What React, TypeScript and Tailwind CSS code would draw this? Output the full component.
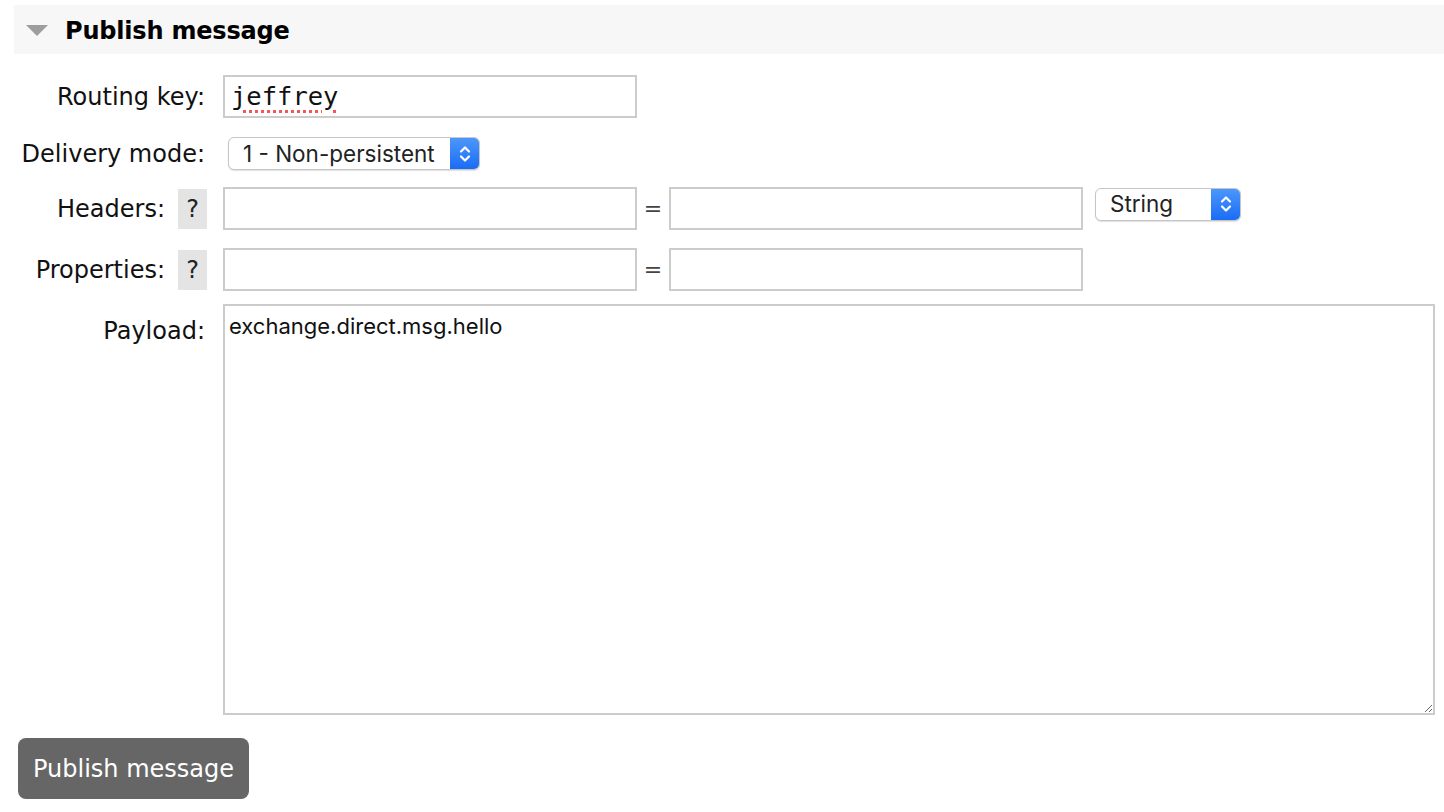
import React, { useState } from 'react';

const Chevrons: React.FC = () => (
  <svg width="14" height="20" viewBox="0 0 14 20" fill="none" stroke="white" strokeWidth="2.2" strokeLinecap="round" strokeLinejoin="round">
    <path d="M3 7.5 L7 3.5 L11 7.5" />
    <path d="M3 12.5 L7 16.5 L11 12.5" />
  </svg>
);

interface SelectProps {
  value: string;
  width: string;
}

const MacSelect: React.FC<SelectProps> = ({ value, width }) => (
  <div
    className={`${width} h-[33px] flex items-stretch rounded-[6px] border border-[#c6c6c6] bg-white shadow-[0_1px_1px_rgba(0,0,0,0.12)] overflow-hidden`}
  >
    <div className="flex-1 flex items-center pl-[14px] text-[22.5px] text-[#222] font-['Inter','Liberation_Sans',sans-serif]">
      {value}
    </div>
    <div className="w-[29px] flex items-center justify-center bg-gradient-to-b from-[#4b97fb] to-[#1a6cf5]">
      <Chevrons />
    </div>
  </div>
);

const Help: React.FC = () => (
  <span className="ml-[13px] inline-flex items-center justify-center w-[29px] h-[40px] bg-[#e4e4e4] text-[24px] text-[#222]">
    ?
  </span>
);

const inputCls =
  'w-[414px] h-[43px] border-2 border-[#cccccc] bg-white outline-none px-[6px] text-[24px]';

export default function App() {
  const [payload, setPayload] = useState('exchange.direct.msg.hello');

  return (
    <div className="w-[1444px] h-[812px] bg-white text-[#111] font-['DejaVu_Sans','Verdana',sans-serif] overflow-hidden">
      <div className="pt-[5px] pl-[14px]">
        {/* Section header */}
        <div className="h-[49px] bg-[#f7f7f7] flex items-center">
          <svg width="22" height="11" viewBox="0 0 22 11" className="ml-[12px] mt-[2px]">
            <polygon points="0,0 22,0 11,11" fill="#9d9d9d" />
          </svg>
          <h2 className="ml-[17px] mt-[3px] text-[24px] font-bold tracking-[-0.2px] text-black">Publish message</h2>
        </div>

        {/* Form */}
        <div className="grid grid-cols-[193px_1fr] gap-x-[16px] text-[24px]">
          <div className="mt-[21px] h-[43px] flex items-center justify-end pr-[2px]">Routing key:</div>
          <div className="mt-[21px]">
            {/* routing key field, with the spell-check squiggle under the word */}
            <div
              role="textbox"
              className={`${inputCls} flex items-center pl-[6px] text-[25.5px] font-['DejaVu_Sans_Mono',monospace]`}
            >
              <span className="underline decoration-dotted decoration-[#f25757] decoration-[3px] underline-offset-[5px]">
                jeffrey
              </span>
            </div>
          </div>

          <div className="mt-[19px] h-[33px] flex items-center justify-end pr-[2px]">Delivery mode:</div>
          <div className="mt-[19px] pl-[5px]">
            <MacSelect value="1 - Non-persistent" width="w-[252px]" />
          </div>

          <div className="mt-[17px] h-[43px] flex items-center justify-end">
            Headers:
            <Help />
          </div>
          <div className="mt-[17px] flex items-center">
            <input className={inputCls} />
            <span className="w-[32px] text-center text-[22px] text-[#444]">=</span>
            <input className={inputCls} />
            <div className="ml-[12px] -mt-[9px]">
              <MacSelect value="String" width="w-[146px]" />
            </div>
          </div>

          <div className="mt-[18px] h-[43px] flex items-center justify-end">
            Properties:
            <Help />
          </div>
          <div className="mt-[18px] flex items-center">
            <input className={inputCls} />
            <span className="w-[32px] text-center text-[22px] text-[#444]">=</span>
            <input className={inputCls} />
          </div>

          <div className="mt-[13px] pt-[9px] flex justify-end pr-[2px] self-start">Payload:</div>
          <div className="mt-[13px]">
            <textarea
              className="block w-[1212px] h-[411px] border-2 border-[#cccccc] outline-none px-[4px] py-[5px] text-[22px] leading-[30px] text-[#111] font-['Inter','Liberation_Sans',sans-serif]"
              value={payload}
              onChange={(e) => setPayload(e.target.value)}
            />
          </div>
        </div>

        <button className="mt-[23px] ml-[4px] w-[231px] h-[61px] rounded-[8px] bg-[#666666] text-white text-[24px] flex items-center justify-center">
          Publish message
        </button>
      </div>
    </div>
  );
}
